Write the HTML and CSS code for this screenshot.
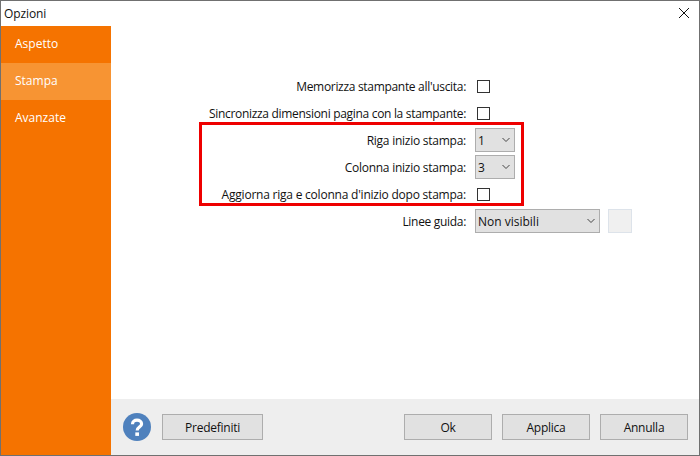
FILE: index.html
```html
<!DOCTYPE html>
<html lang="it">
<head>
<meta charset="utf-8">
<title>Opzioni</title>
<link rel="stylesheet" href="styles.css">
</head>
<body>
<div class="window">
  <header class="titlebar">
    <span class="title">Opzioni</span>
    <svg class="close" width="10" height="10" viewBox="0 0 10 10"><path d="M0 0L10 10M10 0L0 10" stroke="#111" stroke-width="1" fill="none"/></svg>
  </header>
  <div class="body">
    <nav class="sidebar">
      <div class="nav-item">Aspetto</div>
      <div class="nav-item selected">Stampa</div>
      <div class="nav-item">Avanzate</div>
    </nav>
    <main class="main">
      <section class="content">
        <div class="row check-row"><label class="label">Memorizza stampante all'uscita:</label><span class="checkbox"></span></div>
        <div class="row check-row second"><label class="label">Sincronizza dimensioni pagina con la stampante:</label><span class="checkbox"></span></div>
        <div class="highlight">
          <div class="row"><label class="label inner">Riga inizio stampa:</label>
            <div class="select small"><span>1</span><svg class="chev" width="10" height="6" viewBox="0 0 10 6"><path d="M1.5 1L5 4.5L8.5 1" stroke="#444" fill="none"/></svg></div></div>
          <div class="row"><label class="label inner">Colonna inizio stampa:</label>
            <div class="select small"><span>3</span><svg class="chev" width="10" height="6" viewBox="0 0 10 6"><path d="M1.5 1L5 4.5L8.5 1" stroke="#444" fill="none"/></svg></div></div>
          <div class="row check-row third"><label class="label inner">Aggiorna riga e colonna d'inizio dopo stampa:</label><span class="checkbox"></span></div>
        </div>
        <div class="row guide-row"><label class="label">Linee guida:</label>
          <div class="select wide"><span>Non visibili</span><svg class="chev" width="10" height="6" viewBox="0 0 10 6"><path d="M1.5 1L5 4.5L8.5 1" stroke="#444" fill="none"/></svg></div>
          <span class="swatch"></span></div>
      </section>
      <footer class="footer">
        <svg class="help" width="28" height="28" viewBox="0 0 28 28"><circle cx="14" cy="14" r="14" fill="#4F81BD"/><path d="M9.5 11.2C9.5 8.6 11.5 7.2 14 7.2C16.6 7.2 18.6 8.6 18.6 10.9C18.6 14 14.2 14.2 14.2 17.4" stroke="#fff" stroke-width="3.2" fill="none"/><rect x="12.3" y="19.4" width="3.7" height="3.5" fill="#fff"/></svg>
        <button class="btn default-btn">Predefiniti</button>
        <div class="actions">
          <button class="btn">Ok</button>
          <button class="btn">Applica</button>
          <button class="btn">Annulla</button>
        </div>
      </footer>
    </main>
  </div>
</div>
</body>
</html>
```
FILE: styles.css
```css
* { box-sizing: border-box; }
html, body { margin: 0; padding: 0; }
body { width: 700px; height: 456px; overflow: hidden; background: #fff; font-family: "Open Sans", "Noto Sans", sans-serif; font-size: 12px; color: #111; }
.window { width: 700px; height: 456px; display: flex; flex-direction: column; border: 1px solid #707070; }
.titlebar { height: 25px; flex: none; display: flex; align-items: center; justify-content: space-between; padding: 0 10px 1px 3px; }
.title { letter-spacing: -0.1px; }
.body { flex: 1; display: flex; min-height: 0; }
.sidebar { width: 110px; flex: none; background: #F57300; color: #fff; }
.nav-item { height: 37px; line-height: 36px; padding-left: 14px; }
.nav-item.selected { background: #F79433; }
.main { flex: 1; display: flex; flex-direction: column; }
.content { flex: 1; padding: 54px 0 0 88px; }
.row { display: flex; align-items: center; }
.label { width: 267px; margin-right: 9px; white-space: nowrap; flex: none; display: flex; justify-content: flex-end; letter-spacing: -0.31px; }
.label.inner { width: 264px; letter-spacing: -0.25px; }
.third .label.inner { letter-spacing: -0.22px; }
.check-row { height: 13px; }
.second { margin-top: 14px; }
.checkbox { width: 13px; height: 13px; margin-left: 2px; border: 1px solid #333; background: #fff; flex: none; }
.highlight { width: 325px; margin-top: 2px; border: 3px solid #EE0000; padding: 3px 0 2px; }
.highlight .row + .row { margin-top: 3px; }
.highlight .row + .third { margin-top: 9px; }
.select { height: 24px; background: #E1E1E1; border: 1px solid #ADADAD; display: flex; align-items: center; justify-content: space-between; padding: 0 3px 0 2px; flex: none; }
.small { width: 40px; }
.wide { width: 125px; }
.guide-row { margin-top: 3px; }
.swatch { width: 24px; height: 24px; margin-left: 8px; background: #F0F0F0; border: 1px solid #DDE3EA; flex: none; }
.footer { height: 56px; flex: none; background: #EEEEEE; display: flex; align-items: center; padding: 0 11px 0 12px; }
.help { flex: none; }
.btn { height: 26px; width: 88px; background: #E1E1E1; border: 1px solid #ADADAD; font: inherit; letter-spacing: -0.25px; color: #111; padding: 0; }
.default-btn { width: 101px; margin-left: 11px; }
.actions { margin-left: auto; display: flex; gap: 10px; }
```
